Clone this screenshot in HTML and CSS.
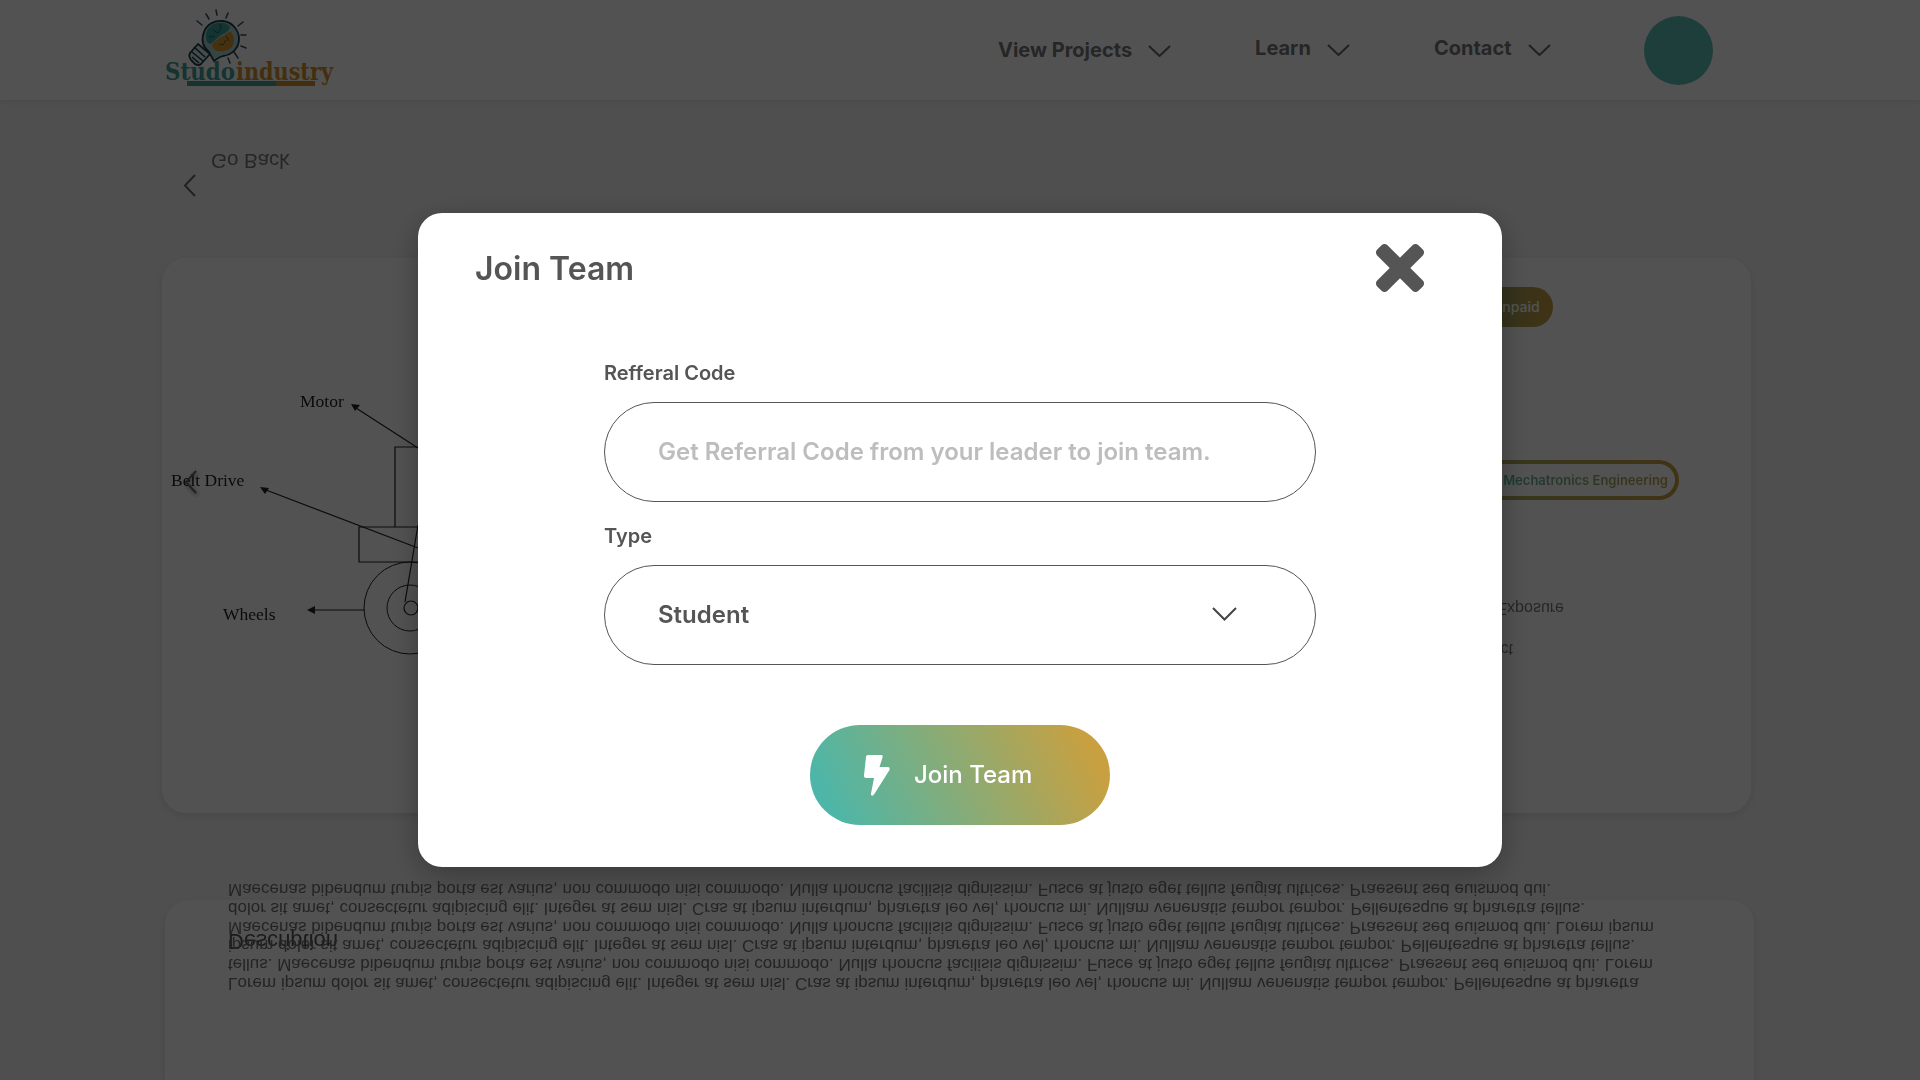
FILE: index.html
```html
<!DOCTYPE html>
<html lang="en">
<head>
  <meta charset="UTF-8" />
  <meta name="viewport" content="width=device-width, initial-scale=1" />
  <title>Join Team</title>
  <link rel="stylesheet" href="styles.css">
</head>
<body>

<header class="topbar">
  <a class="logo" href="#">
    <svg width="172" height="84" viewBox="165 5 172 84">
      <g fill="none" stroke="#35525e" stroke-width="1.600" stroke-linecap="round">
        <path d="M216 10l1 5M206 14l3 5M228 13l-2 5M197 21l5 4M243 22l-5 4M241 35h5M241 46l5 2M234 52l4 6M228 58l2 5"/>
      </g>
      <path d="M209 52c-6-5-8-12-5-20 3-8 11-12 19-11 9 1 16 9 16 18 0 9-7 16-16 17-4 1-6 3-9 5z" fill="#a9d6d2" stroke="#1f3a48" stroke-width="1.800"/>
      <path d="M206 38c-1-7 4-14 11-15 5-1 11 0 13 4-1 5-6 6-10 9-4 3-7 7-10 8-2-1-4-3-4-6z" fill="#3f9f9f"/>
      <path d="M212 45c2-4 7-6 11-9 3-2 6-5 8-4 4 5 4 12 0 16-5 4-13 5-17 1-1-1-2-3-2-4z" fill="#d9962c"/>
      <g fill="none" stroke="#1f4a52" stroke-width=".800">
        <path d="M213 30l5 3 3-5M209 37l6-1M220 24l1 4"/>
        <path d="M219 44l4 1 3-5M226 36l3 5"/>
      </g>
      <g fill="#d8e8e8" stroke="#1f3a48" stroke-width="1.800" stroke-linejoin="round">
        <path d="M198 44l12 10-9 10c-2 2-6 1-8-2l-1-1c-3-3-3-6-2-8z"/>
      </g>
      <path d="M194 47l11 10M192 52l11 9M192 57l7 6" fill="none" stroke="#1f3a48" stroke-width="1.500"/>
      <text class="logo-word" x="165" y="80" textLength="70" lengthAdjust="spacingAndGlyphs" fill="#3f9f9a">Studo</text>
      <text class="logo-word" x="236" y="80" textLength="97" lengthAdjust="spacingAndGlyphs" fill="#d0922c">industry</text>
      <rect x="187" y="81" width="89" height="5" fill="#3f9f9a"/>
      <rect x="276" y="81" width="39" height="5" fill="#d0922c"/>
    </svg>
  </a>

  <nav class="topnav">
    <a class="topnav-item low" href="#">View Projects
      <svg width="23" height="12" viewBox="0 0 23 12"><path d="M1 1l10.500 10L22 1" class="line"/></svg>
    </a>
    <a class="topnav-item" href="#">Learn
      <svg width="23" height="12" viewBox="0 0 23 12"><path d="M1 1l10.500 10L22 1" class="line"/></svg>
    </a>
    <a class="topnav-item" href="#">Contact
      <svg width="23" height="12" viewBox="0 0 23 12"><path d="M1 1l10.500 10L22 1" class="line"/></svg>
    </a>
  </nav>
  <div class="avatar"></div>
</header>

<main class="page">
  <div class="go-back">
    <svg width="13" height="23" viewBox="0 0 13 23"><path d="M12 1L2 11.500 12 22" class="line"/></svg>
    <span class="flipped">Go Back</span>
  </div>

  <section class="project-card">
    <svg class="diagram" width="838" height="555" viewBox="162 258 838 555">
      <g fill="none" stroke="#222" stroke-width="1.200">
        <path d="M356 408L418 448M266 490L418 548M312 610H364"/>
        <path d="M395 527V447H480V527M359 527H480V562H359Z"/>
        <circle cx="410" cy="608" r="46" stroke-width="1"/>
        <circle cx="410" cy="608" r="23" stroke-width="1"/>
        <circle cx="411" cy="608" r="7"/>
        <path d="M418 525L405 602"/>
      </g>
      <path d="M351 404l9 1-5 6zM260 487l9 1-4 6zM307 610l8-4v8z" fill="#222"/>
      <g class="diagram-label">
        <text x="300" y="407">Motor</text>
        <text x="171" y="486">Belt Drive</text>
        <text x="223" y="620">Wheels</text>
      </g>
    </svg>

    <svg class="slide-arrow" width="13" height="24" viewBox="0 0 13 24"><path d="M12 1L2 12l10 11" class="line"/></svg>

    <div class="project-info">
      <span class="tag-unpaid">Unpaid</span>
      <div class="tag-outline"><span>Mechatronics Engineering</span></div>
      <p class="perk perk-first"><span class="flipped">Industry Exposure</span></p>
      <p class="perk perk-second"><span class="flipped">Real Project</span></p>
    </div>
  </section>

  <section class="description-card">
    <h3 class="flipped">Description</h3>
    <p class="flipped">Lorem ipsum dolor sit amet, consectetur adipiscing elit. Integer at sem nisl. Cras at ipsum interdum, pharetra leo vel, rhoncus mi. Nullam venenatis tempor tempor. Pellentesque at pharetra<br>tellus. Maecenas bibendum turpis porta est varius, non commodo nisi commodo. Nulla rhoncus facilisis dignissim. Fusce at justo eget tellus feugiat ultrices. Praesent sed euismod dui. Lorem<br>ipsum dolor sit amet, consectetur adipiscing elit. Integer at sem nisl. Cras at ipsum interdum, pharetra leo vel, rhoncus mi. Nullam venenatis tempor tempor. Pellentesque at pharetra tellus.<br>Maecenas bibendum turpis porta est varius, non commodo nisi commodo. Nulla rhoncus facilisis dignissim. Fusce at justo eget tellus feugiat ultrices. Praesent sed euismod dui. Lorem ipsum<br>dolor sit amet, consectetur adipiscing elit. Integer at sem nisl. Cras at ipsum interdum, pharetra leo vel, rhoncus mi. Nullam venenatis tempor tempor. Pellentesque at pharetra tellus.<br>Maecenas bibendum turpis porta est varius, non commodo nisi commodo. Nulla rhoncus facilisis dignissim. Fusce at justo eget tellus feugiat ultrices. Praesent sed euismod dui.</p>
  </section>
</main>

<div class="overlay">
  <div class="modal">
    <div class="modal-head">
      <h2>Join Team</h2>
      <svg width="50" height="50" viewBox="1 1 48 48">
        <rect x="-3" y="18" width="56" height="14" rx="4" fill="#555" transform="rotate(45 25 25)"/>
        <rect x="-3" y="18" width="56" height="14" rx="4" fill="#555" transform="rotate(-45 25 25)"/>
      </svg>
    </div>

    <form class="modal-form">
      <label for="refCode">Refferal Code</label>
      <input id="refCode" type="text" placeholder="Get Referral Code from your leader to join team.">

      <label class="label-type">Type</label>
      <div class="select-box">
        <span>Student</span>
        <svg width="25" height="14" viewBox="0 0 25 14"><path d="M1 1l11.500 11.500L24 1" class="line line-dark"/></svg>
      </div>

      <button class="join-btn" type="button">
        <svg width="26" height="41" viewBox="0 0 26 41"><path d="M4 0h13c1.500 0 2 1 1.500 2.500L15.500 12H24c1.500 0 2 1.500 1.500 3L10 39.500c-1.200 2-3.500 1.200-3-1L10 23H2c-1.500 0-2-1-2-2.500L2 2c0-1.200 1-2 2-2z" fill="#fff"/></svg>
        <span class="join-label">Join Team</span>
      </button>
    </form>
  </div>
</div>

</body>
</html>
```

FILE: styles.css
```css
* {
  box-sizing: border-box;
}

body {
  margin: 0;
  height: 1080px;
  overflow: hidden;
  background-color: #f6f6f6;
  font-family: 'Liberation Sans', Arial, sans-serif;
  color: #222;
}

.line {
  fill: none;
  stroke: #666;
  stroke-width: 2;
}

.line-dark {
  stroke: #444;
}

.flipped {
  transform: scaleY(-1);
}

/* top bar */
.topbar {
  display: flex;
  align-items: center;
  height: 100px;
  padding-left: 165px;
  background-color: #fff;
  box-shadow: 0 2px 8px rgba(0, 0, 0, 0.08);
}

.logo {
  display: block;
  height: 84px;
  margin-top: -6px;
}

.logo-word {
  font-family: 'DejaVu Serif', serif;
  font-weight: 700;
  font-size: 25px;
}

.topnav {
  display: flex;
  margin-left: 661px;
}

.topnav-item {
  display: flex;
  align-items: center;
  gap: 16px;
  margin-right: 84px;
  font-family: Inter, sans-serif;
  font-size: 20px;
  font-weight: 700;
  line-height: 24px;
  color: #777;
  text-decoration: none;
}

.topnav-item svg {
  margin-top: 4px;
}

.topnav-item.low {
  margin-top: 0;
}

.topnav-item.low svg {
  margin-top: 2px;
}

.topnav-item:not(.low) {
  margin-top: -4px;
}

.avatar {
  width: 69px;
  height: 69px;
  margin-left: 9px;
  border-radius: 50%;
  background-color: #5fc0bc;
}

/* page behind the dialog */
.page {
  padding-top: 48px;
}

.go-back {
  display: flex;
  align-items: flex-start;
  gap: 15px;
  height: 110px;
  padding-left: 183px;
}

.go-back svg {
  margin-top: 26px;
}

.go-back span {
  display: block;
  font-size: 20.500px;
  line-height: 26px;
  color: #777;
}

.project-card {
  position: relative;
  display: flex;
  width: 1589px;
  height: 555px;
  margin-left: 162px;
  border-radius: 24px;
  background-color: #fff;
  box-shadow: 0 3px 10px rgba(0, 0, 0, 0.1);
}

.diagram {
  flex: none;
  filter: blur(0.4px);
}

.diagram-label {
  font-family: 'Liberation Serif', serif;
  font-size: 17.500px;
  fill: #222;
}

.slide-arrow {
  position: absolute;
  top: 212px;
  left: 22px;
  filter: drop-shadow(1px 2px 2px rgba(0, 0, 0, 0.5));
}

.project-info {
  width: 679px;
}

.tag-unpaid {
  display: block;
  width: 113px;
  height: 40px;
  margin: 29px 0 133px 440px;
  padding-left: 52px;
  border-radius: 20px;
  background: linear-gradient(90deg, #6f9d7e, #c9a040);
  font-family: Inter, sans-serif;
  font-size: 14px;
  font-weight: 500;
  line-height: 40px;
  color: #fff;
}

.tag-outline {
  position: relative;
  display: flex;
  justify-content: flex-end;
  height: 40px;
  padding: 3px 11px 3px 0;
  border-radius: 20px;
  background: linear-gradient(90deg, #4fb5a5, #c9a040);
}

.tag-outline::before {
  content: "";
  position: absolute;
  inset: 4px;
  border-radius: 16px;
  background-color: #fff;
}

.tag-outline span {
  position: relative;
  font-family: Inter, sans-serif;
  font-size: 13px;
  font-weight: 600;
  line-height: 34px;
  background: linear-gradient(90deg, #4fb5a5, #c9a040);
  -webkit-background-clip: text;
  background-clip: text;
  color: transparent;
}

.perk {
  margin: 0;
  font-size: 16px;
  line-height: 20px;
  text-align: right;
  color: #777;
}

.perk span {
  display: inline-block;
}

.perk-first {
  width: 564px;
  margin-top: 98px;
}

.perk-second {
  width: 513px;
  margin-top: 21px;
}

.description-card {
  position: relative;
  width: 1589px;
  height: 180px;
  margin: 87px 0 0 165px;
  border-radius: 24px 24px 0 0;
  background-color: #fff;
  box-shadow: 0 3px 10px rgba(0, 0, 0, 0.1);
}

.description-card h3 {
  position: absolute;
  top: 28px;
  left: 63px;
  margin: 0;
  font-size: 22px;
  font-weight: 400;
  line-height: 26px;
  color: #555;
}

.description-card p {
  position: absolute;
  top: -21px;
  left: 63px;
  width: 1440px;
  margin: 0;
  font-size: 17px;
  line-height: 18.800px;
  color: #707070;
}

/* dialog */
.overlay {
  position: fixed;
  inset: 0;
  display: flex;
  align-items: center;
  justify-content: center;
  background-color: rgba(0, 0, 0, 0.68);
}

.modal {
  width: 1084px;
  height: 654px;
  padding: 30px 77px 0 57px;
  border-radius: 24px;
  background-color: #fff;
  box-shadow: 0 8px 30px rgba(0, 0, 0, 0.3);
  font-family: Inter, sans-serif;
  color: #555;
}

.modal-head {
  display: flex;
  justify-content: space-between;
  align-items: center;
}

.modal-head h2 {
  margin: 0;
  font-size: 32px;
  font-weight: 600;
}

.modal-form {
  display: flex;
  flex-direction: column;
  width: 712px;
  margin: 68px 0 0 129px;
}

.modal-form label {
  font-size: 20px;
  font-weight: 600;
  line-height: 24px;
}

.modal-form input,
.select-box {
  width: 712px;
  height: 100px;
  margin-top: 17px;
  padding: 0 53px 2px;
  border: 1px solid #555;
  border-radius: 50px;
  font-family: Inter, sans-serif;
  font-size: 24px;
  background-color: #fff;
}

.modal-form input {
  font-weight: 600;
  outline: none;
}

.modal-form input::placeholder {
  color: #bdbdbd;
  opacity: 1;
}

.modal-form .label-type {
  margin-top: 22px;
}

.select-box {
  display: flex;
  align-items: center;
  justify-content: space-between;
  padding-right: 78px;
  font-weight: 600;
}

.join-btn {
  display: flex;
  align-items: center;
  gap: 24px;
  width: 300px;
  height: 100px;
  margin: 60px auto 0;
  padding: 0 0 0 54px;
  border: none;
  border-radius: 50px;
  background: linear-gradient(65deg, #4db6a8 8%, #c9a040 92%);
  font-family: Inter, sans-serif;
  font-size: 24px;
  font-weight: 500;
  color: #fff;
}

.join-label {
  margin-bottom: 2px;
}
```
